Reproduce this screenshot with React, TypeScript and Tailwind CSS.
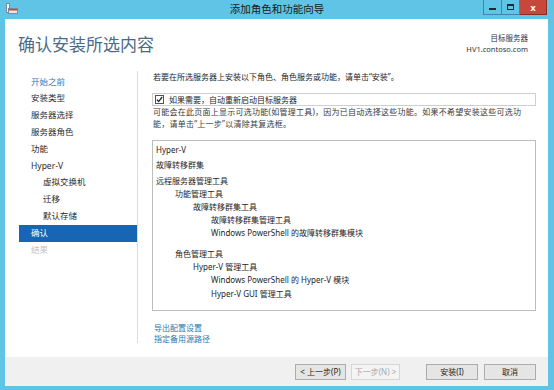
import React from "react";

const navItems = [
  { label: "开始之前", kind: "link", sub: false },
  { label: "安装类型", kind: "normal", sub: false },
  { label: "服务器选择", kind: "normal", sub: false },
  { label: "服务器角色", kind: "normal", sub: false },
  { label: "功能", kind: "normal", sub: false },
  { label: "Hyper-V", kind: "normal", sub: false },
  { label: "虚拟交换机", kind: "normal", sub: true },
  { label: "迁移", kind: "normal", sub: true },
  { label: "默认存储", kind: "normal", sub: true },
  { label: "确认", kind: "active", sub: false },
  { label: "结果", kind: "disabled", sub: false },
];

// text, indent class, top gap class
const tree = [
  ["Hyper-V", "pl-[3px]", "mt-0"],
  ["故障转移群集", "pl-[3px]", "mt-[1.5px]"],
  ["远程服务器管理工具", "pl-[3px]", "mt-[3px]"],
  ["功能管理工具", "pl-[22px]", "mt-0"],
  ["故障转移群集工具", "pl-[40px]", "mt-0"],
  ["故障转移群集管理工具", "pl-[58px]", "mt-0"],
  ["Windows PowerShell 的故障转移群集模块", "pl-[58px]", "mt-0"],
  ["角色管理工具", "pl-[22px]", "mt-[8px]"],
  ["Hyper-V 管理工具", "pl-[40px]", "mt-0"],
  ["Windows PowerShell 的 Hyper-V 模块", "pl-[58px]", "mt-0"],
  ["Hyper-V GUI 管理工具", "pl-[58px]", "mt-[1px]"],
];

function WizardIcon() {
  return (
    <svg width="12" height="11" viewBox="0 0 12 11">
      <rect x="0.5" y="0.5" width="3" height="9" fill="#f4f4f4" stroke="#7a8a96" />
      <rect x="2.5" y="5.5" width="9" height="5" fill="#e8e8e8" stroke="#7a8a96" />
      <rect x="3" y="6" width="8" height="1.5" fill="#c24a3a" />
    </svg>
  );
}

function Check() {
  return (
    <span className="w-[9px] h-[9px] border border-[#555] bg-white flex items-center justify-center">
      <svg width="7" height="7" viewBox="0 0 7 7">
        <path d="M0.8 3.6 L2.6 5.6 L6.2 1" fill="none" stroke="#222" strokeWidth="1.3" />
      </svg>
    </span>
  );
}

export default function App() {
  return (
    <div className="w-[554px] h-[390px] bg-[#5fc4e6] flex flex-col overflow-hidden font-['Noto_Sans','Noto_Sans_CJK_SC',sans-serif] text-[#1e1e1e]">
      {/* title bar */}
      <div className="h-[19px] grid grid-cols-[1fr_auto_1fr] items-start">
        <div className="pl-[6px] pt-[3px]">
          <WizardIcon />
        </div>
        <div className="text-[10.5px] leading-[19px] text-[#1a1a1a]">添加角色和功能向导</div>
        <div className="flex justify-end pr-[7px]">
          <div className="w-[19px] h-[15px] border border-[#3b88a8] border-t-0 flex items-center justify-center">
            <span className="w-[7px] h-[2px] bg-[#1d2a33] mt-[4px]" />
          </div>
          <div className="w-[18px] h-[15px] border border-[#3b88a8] border-t-0 border-l-0 flex items-center justify-center">
            <span className="w-[7px] h-[6px] border-[1.5px] border-t-[2px] border-[#1d2a33]" />
          </div>
          <div className="w-[27px] h-[15px] bg-[#c7473a] border border-[#8c2c22] border-t-0 border-l-0 flex items-center justify-center text-white text-[9px] font-bold leading-none">
            x
          </div>
        </div>
      </div>

      {/* window body */}
      <div className="flex-1 ml-[5px] mr-[6px] mb-[4px] bg-white flex flex-col">
        <div className="h-[52px] flex justify-between">
          <div className="pl-[13px] pt-[15px] text-[17px] leading-[22px] text-[#4a6c88]">确认安装所选内容</div>
          <div className="pr-[20px] pt-[14px] text-right text-[7.5px] leading-[11px] text-[#333]">
            <div>目标服务器</div>
            <div>HV1.contoso.com</div>
          </div>
        </div>

        <div className="flex-1 flex">
          <div className="w-[133px] mb-[14px] border-r border-[#dcdcdc] pt-[2.6px]">
            {navItems.map((item) => (
              <div
                key={item.label}
                className={
                  "ml-[14px] h-[16.8px] leading-[16.8px] text-[8.5px] " +
                  (item.sub ? "pl-[24px] " : "pl-[12px] ") +
                  (item.kind === "active"
                    ? "bg-[#1766b3] text-white"
                    : item.kind === "link"
                    ? "text-[#3a73b8]"
                    : item.kind === "disabled"
                    ? "text-[#c4c4c4]"
                    : "text-[#2b2b2b]")
                }
              >
                {item.label}
              </div>
            ))}
          </div>

          <div className="flex-1 pl-[14px] pr-[12px] text-[8px]">
            <div className="pl-[1px] leading-[12px]">若要在所选服务器上安装以下角色、角色服务或功能，请单击“安装”。</div>
            <div className="mt-[10px] h-[13px] border border-[#cfcfcf] flex items-center pl-[2px] gap-[5px]">
              <Check />
              <span className="leading-[11px]">如果需要，自动重新启动目标服务器</span>
            </div>
            <div className="pl-[1px] leading-[12px] text-[#3a3a3a] whitespace-nowrap tracking-[0.25px]">
              可能会在此页面上显示可选功能(如管理工具)，因为已自动选择这些功能。如果不希望安装这些可选功
              <br />
              能，请单击“上一步”以清除其复选框。
            </div>
            <div className="mt-[10px] h-[171px] border border-[#bdbdbd] pt-[2px]">
              {tree.map(([text, indent, gap]) => (
                <div key={text} className={"h-[13px] leading-[13px] " + indent + " " + gap}>
                  {text}
                </div>
              ))}
            </div>
            <div className="mt-[11px] pl-[2px] text-[#2c78b4] leading-[11px]">
              <div>导出配置设置</div>
              <div>指定备用源路径</div>
            </div>
          </div>
        </div>

        <div className="h-[29px] bg-[#f0f0f0] flex items-center justify-end pr-[12px] text-[8px]">
          <button className="w-[51px] h-[16px] bg-[#e5e5e5] border border-[#acacac] leading-none">&lt; 上一步(P)</button>
          <button className="ml-[5px] w-[49px] h-[16px] bg-[#f4f4f4] border border-[#d5d5d5] text-[#a8a8a8] leading-none">下一步(N) &gt;</button>
          <button className="ml-[26px] w-[52px] h-[16px] bg-[#e5e5e5] border border-[#acacac] leading-none">安装(I)</button>
          <button className="ml-[6px] w-[52px] h-[16px] bg-[#e5e5e5] border border-[#acacac] leading-none">取消</button>
        </div>
      </div>
    </div>
  );
}
